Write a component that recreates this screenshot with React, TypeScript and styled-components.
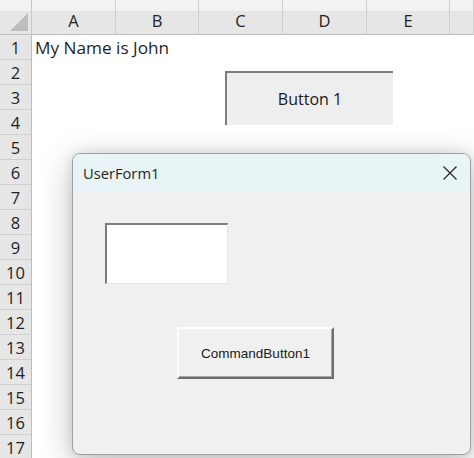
import React from 'react';
import styled, { createGlobalStyle } from 'styled-components';

const GlobalStyle = createGlobalStyle`
  html, body {
    margin: 0;
    padding: 0;
    background: #ffffff;
  }
`;

const COLS = ['A', 'B', 'C', 'D', 'E', ''];
const ROWS = Array.from({ length: 17 }, (_, i) => i + 1);
const GRID = '32px 84px 83px 84px 84px 83px 1fr';

const Screen = styled.div`
  position: relative;
  width: 474px;
  height: 458px;
  overflow: hidden;
  background: #fff;
  font-family: 'Open Sans', 'Noto Sans', sans-serif;
  color: #1f1f1f;
`;

const Sheet = styled.div`
  display: grid;
  grid-template-columns: ${GRID};
  grid-template-rows: 35px repeat(17, 25px);
`;

const Corner = styled.div`
  background: linear-gradient(#f2f2f2 0 11px, #e6e6e6 11px);
  border-right: 1px solid #c8c8c8;
  border-bottom: 1px solid #bdbdbd;
  display: flex;
  align-items: flex-end;
  justify-content: flex-end;
  padding: 0 3px 3px 0;
  box-sizing: border-box;
`;

const ColHead = styled.div`
  background: linear-gradient(#f2f2f2 0 11px, #e6e6e6 11px);
  border-right: 1px solid #cfcfcf;
  border-bottom: 1px solid #bdbdbd;
  box-sizing: border-box;
  display: flex;
  align-items: flex-end;
  justify-content: center;
  padding-bottom: 2px;
  font-size: 16.5px;
  line-height: 22px;
`;

const RowHead = styled.div`
  background: #e6e6e6;
  border-right: 1px solid #bdbdbd;
  border-bottom: 1px solid #cfcfcf;
  box-sizing: border-box;
  display: flex;
  align-items: center;
  justify-content: center;
  font-size: 16.5px;
`;

const Cell = styled.div<{ $overflow?: boolean }>`
  background: #fff;
  font-size: 17.2px;
  line-height: 25px;
  padding-left: 3px;
  white-space: nowrap;
  overflow: ${(p) => (p.$overflow ? 'visible' : 'hidden')};
  position: relative;
  z-index: ${(p) => (p.$overflow ? 1 : 0)};
`;

const SheetButton = styled.div`
  position: absolute;
  left: 225px;
  top: 71px;
  width: 168px;
  height: 54px;
  box-sizing: border-box;
  background: #eeeeee;
  border-top: 2px solid #7c7c7c;
  border-left: 2px solid #7c7c7c;
  display: flex;
  align-items: center;
  justify-content: center;
  font-size: 16px;
  color: #1a1a1a;
`;

const Dialog = styled.div`
  position: absolute;
  left: 72px;
  top: 153px;
  width: 399px;
  height: 302px;
  box-sizing: border-box;
  border: 1px solid #a0a0a0;
  border-radius: 8px;
  background: #f0f0f0;
  box-shadow: 0 8px 34px rgba(0, 0, 0, 0.26), 0 0 10px rgba(0, 0, 0, 0.1);
  overflow: hidden;
  display: flex;
  flex-direction: column;
`;

const TitleBar = styled.div`
  height: 38px;
  flex: none;
  background: #e9f4f6;
  display: flex;
  align-items: center;
  justify-content: space-between;
  padding: 0 12px 0 10px;
`;

const Title = styled.span`
  font-size: 14.7px;
  color: #1f1f1f;
`;

const CloseIcon = () => (
  <svg width="16" height="16" viewBox="0 0 16 16" fill="none">
    <path d="M1.5 1.5 14.5 14.5M14.5 1.5 1.5 14.5" stroke="#2a2a2a" strokeWidth="1.3" />
  </svg>
);

const Body = styled.div`
  flex: 1;
  display: flex;
  flex-direction: column;
  align-items: flex-start;
  padding: 31px 0 0 32px;
`;

const TextBox = styled.div`
  width: 123px;
  height: 61px;
  box-sizing: border-box;
  background: #fff;
  border-top: 2px solid #7d7d7d;
  border-left: 2px solid #7d7d7d;
  border-right: 1px solid #e4e4e4;
  border-bottom: 1px solid #e4e4e4;
`;

const CommandButton = styled.div`
  margin: 43px 0 0 72px;
  width: 157px;
  height: 52px;
  box-sizing: border-box;
  background: #f0f0f0;
  border-top: 2px solid #fdfdfd;
  border-left: 2px solid #fdfdfd;
  border-right: 2px solid #6e6e6e;
  border-bottom: 2px solid #6e6e6e;
  box-shadow: inset -1px -1px 0 #a8a8a8;
  display: flex;
  align-items: center;
  justify-content: center;
  font-family: 'Liberation Sans', Arial, sans-serif;
  font-size: 13.5px;
  color: #1a1a1a;
`;

const CornerMark = () => (
  <svg width="18" height="18" viewBox="0 0 18 18">
    <polygon points="18,0 18,18 0,18" fill="#bdbdbd" />
  </svg>
);

export default function App() {
  return (
    <Screen>
      <GlobalStyle />
      <Sheet>
        <Corner>
          <CornerMark />
        </Corner>
        {COLS.map((c, i) => (
          <ColHead key={'h' + i}>{c}</ColHead>
        ))}
        {ROWS.map((r) => (
          <React.Fragment key={r}>
            <RowHead>{r}</RowHead>
            {COLS.map((_, i) => (
              <Cell key={i} $overflow={r === 1 && i === 0}>
                {r === 1 && i === 0 ? 'My Name is John' : ''}
              </Cell>
            ))}
          </React.Fragment>
        ))}
      </Sheet>
      <SheetButton>Button 1</SheetButton>
      <Dialog>
        <TitleBar>
          <Title>UserForm1</Title>
          <CloseIcon />
        </TitleBar>
        <Body>
          <TextBox />
          <CommandButton>CommandButton1</CommandButton>
        </Body>
      </Dialog>
    </Screen>
  );
}
